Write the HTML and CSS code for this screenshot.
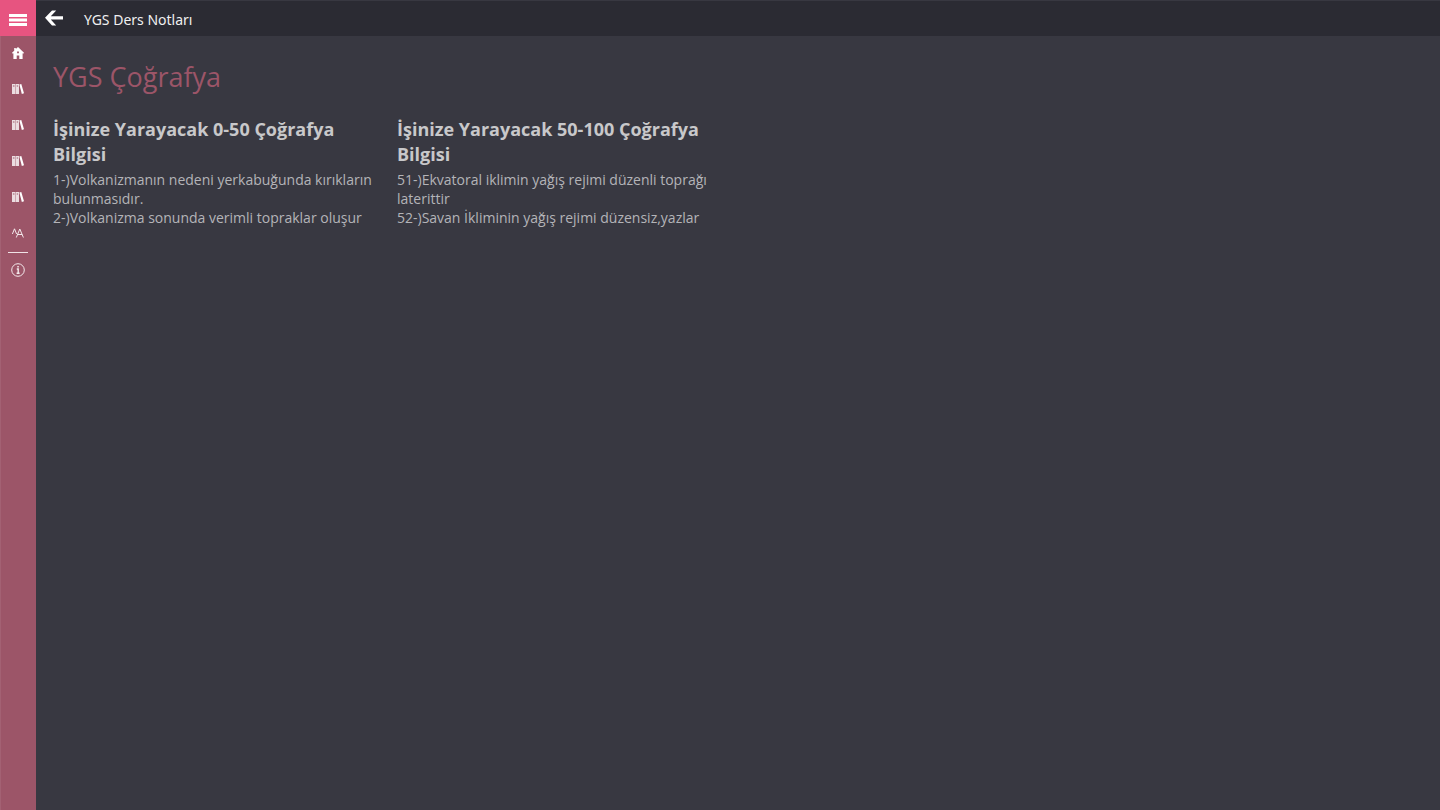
FILE: index.html
```html
<!DOCTYPE html>
<html lang="tr">
<head>
<meta charset="utf-8">
<meta name="viewport" content="width=device-width, initial-scale=1">
<title>YGS Ders Notları</title>
<link rel="stylesheet" href="styles.css">
</head>
<body class="app">
<svg class="defs" aria-hidden="true">
  <symbol id="books" viewBox="0 0 12 10"><path opacity=".8" fill-rule="evenodd" d="M0 0H3.4V10H0ZM.9 1.6V2.5H2.5V1.6ZM3.8 0H7V10H3.8ZM4.7 1.6V2.5H6.1V1.6Z"/><path d="M7.4.6L9.3 0L12 9.2L9.8 9.9Z"/></symbol>
</svg>
<nav class="rail" aria-label="Menü">
  <button class="rail-button menu" type="button" aria-label="Menü">
    <svg width="18" height="12" viewBox="0 0 18 12"><path d="M0 0H18V3H0ZM0 4.5H18V7.5H0ZM0 9H18V12H0Z"/></svg>
  </button>
  <button class="rail-button" type="button" aria-label="Ana sayfa">
    <svg width="12" height="12" viewBox="0 0 12 12"><path fill-rule="evenodd" d="M2.2 1H3.8V2.1L6 0L12 5.8L11.2 6.8L10.6 6.3V12H7.3V8.6H4.7V12H1.4V6.3L.8 6.8L0 5.8L2.2 3.7ZM5.1 4.6V6.3H6.9V4.6Z"/></svg>
  </button>
  <button class="rail-button" type="button" aria-label="Ders notları 1"><svg width="12" height="10"><use href="#books"/></svg></button>
  <button class="rail-button" type="button" aria-label="Ders notları 2"><svg width="12" height="10"><use href="#books"/></svg></button>
  <button class="rail-button" type="button" aria-label="Ders notları 3"><svg width="12" height="10"><use href="#books"/></svg></button>
  <button class="rail-button" type="button" aria-label="Ders notları 4"><svg width="12" height="10"><use href="#books"/></svg></button>
  <button class="rail-button" type="button" aria-label="Yazı boyutu">
    <svg class="line" width="12" height="10" viewBox="0 0 12 10"><path d="M.4 6L2.5.8L4.6 6M4.3 9.5L7.8 1L11.4 9.5M5.5 6.5H10.2"/></svg>
  </button>
  <hr class="divider">
  <button class="rail-button" type="button" aria-label="Hakkında">
    <svg class="line" width="14" height="14" viewBox="0 0 14 14"><circle cx="7" cy="7" r="6.3"/><path class="info" d="M5.8 6H7.2V10.3M5.6 10.3H8.6M6.3 3.8H7.8"/></svg>
  </button>
</nav>
<div class="page">
  <header class="topbar">
    <button class="back" type="button" aria-label="Geri">
      <svg width="18" height="16" viewBox="0 0 18 16"><path d="M7 .4H11.2L5.8 6.2H18V9.4H5.8L11.2 15.4H7L0 7.8Z"/></svg>
    </button>
    <span class="app-name">YGS Ders Notları</span>
  </header>
  <main class="content">
    <h1 class="title">YGS Çoğrafya</h1>
    <div class="notes">
      <article class="note">
        <h2 class="note-title">İşinize Yarayacak 0-50 Çoğrafya Bilgisi</h2>
        <p class="note-text">1-)Volkanizmanın nedeni yerkabuğunda kırıkların bulunmasıdır.<br>2-)Volkanizma sonunda verimli topraklar oluşur</p>
      </article>
      <article class="note">
        <h2 class="note-title">İşinize Yarayacak 50-100 Çoğrafya Bilgisi</h2>
        <p class="note-text">51-)Ekvatoral iklimin yağış rejimi düzenli toprağı laterittir<br>52-)Savan İkliminin yağış rejimi düzensiz,yazlar</p>
      </article>
    </div>
  </main>
</div>
</body>
</html>
```
FILE: styles.css
```css
* { box-sizing: border-box; }
.app {
  margin: 0;
  min-height: 100vh;
  display: flex;
  background: #383841;
  color: #c8c8ca;
  font-family: "Open Sans", "Noto Sans", sans-serif;
  font-size: 14px;
}
.defs { position: absolute; width: 0; height: 0; }
.rail {
  flex: none;
  width: 36px;
  display: flex;
  flex-direction: column;
  background: #9c5568;
  box-shadow: inset 1px 0 #a36173;
}
.rail-button, .back {
  display: flex;
  align-items: center;
  justify-content: center;
  padding: 0 0 2px;
  border: 0;
  background: none;
  color: #fff;
}
.rail-button { height: 36px; }
.rail-button svg, .back svg { fill: currentColor; }
.menu { background: #e75480; padding: 4px 0 0; }
.rail-button .line { fill: none; stroke: #f4e9ec; stroke-width: 1; }
.rail-button .info { stroke-width: 1.4; }
.divider {
  width: 20px;
  height: 1px;
  margin: 0 auto;
  border: 0;
  background: #f0e2e6;
}
.page { flex: 1; min-width: 0; }
.topbar {
  height: 36px;
  display: flex;
  align-items: center;
  gap: 12px;
  background: #2b2b33;
  border-top: 1px solid #383841;
}
.back { width: 36px; height: 36px; }
.app-name {
  color: #f0f0f0;
  font-family: "Noto Sans", sans-serif;
  padding-top: 1px;
}
.content { padding: 21px 17px; }
.title {
  margin: 0 0 20px;
  color: #9c5568;
  font-size: 27px;
  line-height: 40px;
  font-weight: 400;
}
.notes { display: flex; flex-wrap: wrap; gap: 24px; }
.note { width: 320px; }
.note-title { margin: 0; font-size: 18px; line-height: 25px; font-weight: 700; }
.note-text { margin: 3px 0 0; color: #b4b4b8; line-height: 19px; }
```
